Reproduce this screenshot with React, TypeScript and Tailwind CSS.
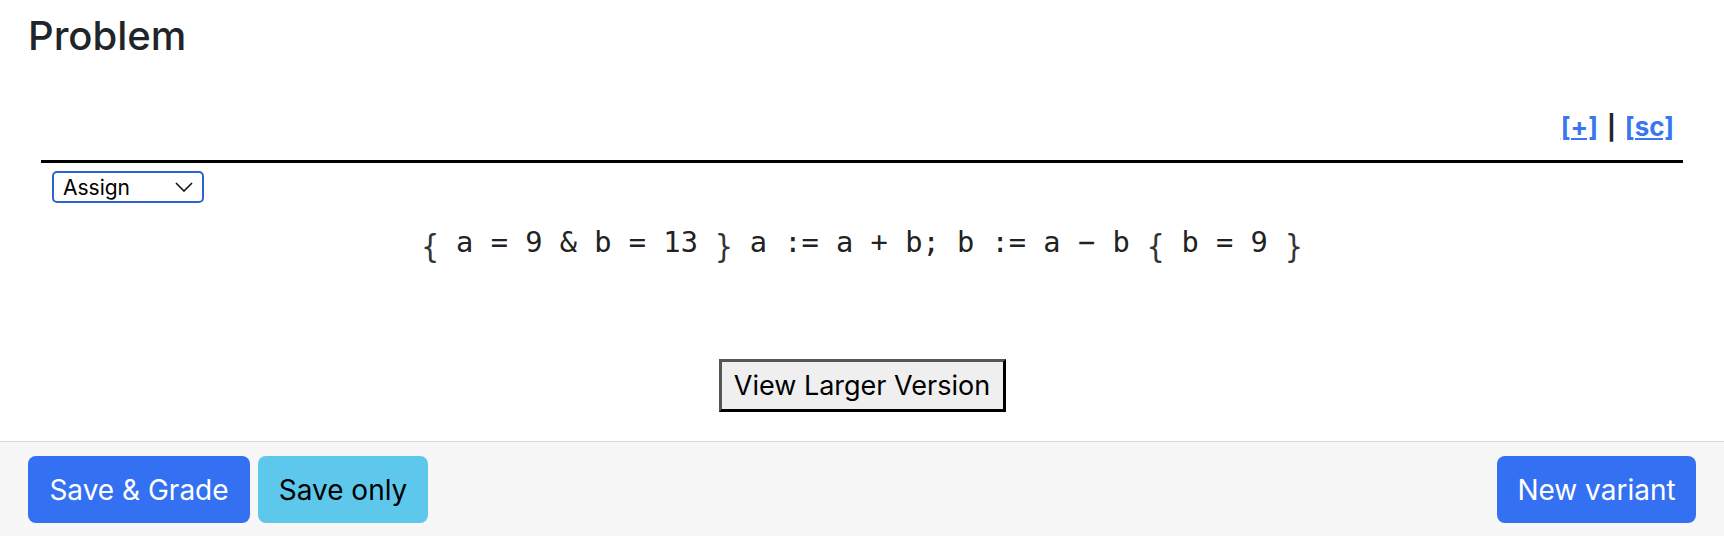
function Brace({ ch }: { ch: string }) {
  return <span className="inline-block translate-y-[4px] scale-y-110 text-[#333]">{ch}</span>;
}

export default function App() {
  return (
    <div className="w-full h-[536px] bg-white flex flex-col overflow-hidden font-['Inter',sans-serif] text-[#212529]">
      <div className="flex-1 flex flex-col">
        <h2 className="pl-[28px] pt-[16px] text-[40px] leading-none font-medium">Problem</h2>
        <div className="px-[41px] flex flex-col">
          <div className="mt-[58px] flex justify-end items-baseline gap-[9px] pr-[9px] text-[26px] font-bold leading-none">
            <a href="#" className="text-[#3b76f1] underline decoration-2 underline-offset-[2px]">[+]</a>
            <span className="text-[#212529] text-[24px]">|</span>
            <a href="#" className="text-[#3b76f1] underline decoration-2 underline-offset-[2px]">[sc]</a>
          </div>
          <div className="mt-[20px] h-[3px] bg-black" />
          <div className="mt-[8px] ml-[11px] w-[152px] h-[32px] border-2 border-[#2d62d0] rounded-[5px] flex items-center justify-between pl-[9px] pr-[9px] text-[21px] leading-none text-black">
            <span>Assign</span>
            <svg width="18" height="10" viewBox="0 0 18 10" fill="none">
              <polyline points="1,1 9,9 17,1" stroke="#111" strokeWidth="1.6" />
            </svg>
          </div>
          <div className="mt-[25px] text-center font-['DejaVu_Sans_Mono',monospace] text-[28.7px] leading-none text-[#222] whitespace-pre">
            <Brace ch="{" />
            {" a = 9 & b = 13 "}
            <Brace ch="}" />
            {" a := a + b; b := a − b "}
            <Brace ch="{" />
            {" b = 9 "}
            <Brace ch="}" />
          </div>
          <div className="mt-[102px] flex justify-center">
            <button className="w-[287px] h-[53px] bg-[#efefef] border-[3px] border-t-[#555] border-l-[#555] border-r-black border-b-black text-[27px] leading-none text-black">
              View Larger Version
            </button>
          </div>
        </div>
      </div>
      <div className="h-[95px] border-t border-[#d9d9d9] bg-[#f7f7f7] px-[28px] pt-[14px] flex justify-between items-start">
        <div className="flex gap-[8px]">
          <button className="w-[222px] h-[67px] rounded-[8px] bg-[#3470f2] text-white text-[28px] leading-none">
            Save &amp; Grade
          </button>
          <button className="w-[170px] h-[67px] rounded-[8px] bg-[#5ec8ec] text-black text-[28px] leading-none">
            Save only
          </button>
        </div>
        <button className="w-[199px] h-[67px] rounded-[8px] bg-[#3470f2] text-white text-[28px] leading-none">
          New variant
        </button>
      </div>
    </div>
  );
}
